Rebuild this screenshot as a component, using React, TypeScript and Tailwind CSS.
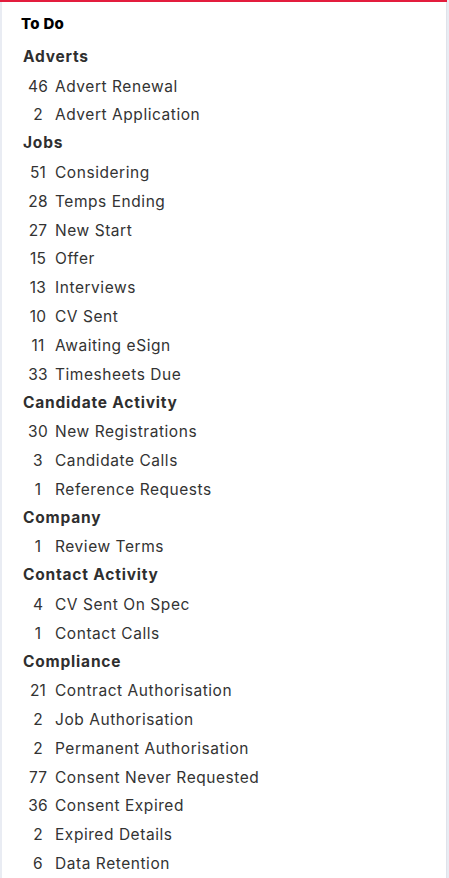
import React from "react";

type Item = [number, string];
type Section = { title: string; items: Item[] };

const sections: Section[] = [
  { title: "Adverts", items: [[46, "Advert Renewal"], [2, "Advert Application"]] },
  {
    title: "Jobs",
    items: [
      [51, "Considering"],
      [28, "Temps Ending"],
      [27, "New Start"],
      [15, "Offer"],
      [13, "Interviews"],
      [10, "CV Sent"],
      [11, "Awaiting eSign"],
      [33, "Timesheets Due"],
    ],
  },
  {
    title: "Candidate Activity",
    items: [[30, "New Registrations"], [3, "Candidate Calls"], [1, "Reference Requests"]],
  },
  { title: "Company", items: [[1, "Review Terms"]] },
  { title: "Contact Activity", items: [[4, "CV Sent On Spec"], [1, "Contact Calls"]] },
  {
    title: "Compliance",
    items: [
      [21, "Contract Authorisation"],
      [2, "Job Authorisation"],
      [2, "Permanent Authorisation"],
      [77, "Consent Never Requested"],
      [36, "Consent Expired"],
      [2, "Expired Details"],
      [6, "Data Retention"],
    ],
  },
];

export default function App() {
  return (
    <div
      className="min-h-[878px] w-[449px] bg-[#e9ecf3] overflow-hidden"
      style={{ fontFamily: "Inter, 'Noto Sans', sans-serif" }}
    >
      <div className="h-[2px] w-[447px] bg-[#e31d3d]" />
      <div className="ml-[2px] w-[445px] bg-white min-h-[876px] border-r border-[#dfe3ea]">
        <div className="pl-[19px] pt-[11px] text-[15px] leading-[22px] font-extrabold tracking-[0.3px] text-black">To Do</div>
        <div className="pt-[8px]">
          {sections.map((s) => (
            <div key={s.title}>
              <div className="pl-[21px] h-[28.8px] leading-[28.8px] text-[15.5px] font-bold tracking-[0.8px] text-[#2f2f2f]">
                {s.title}
              </div>
              {s.items.map(([n, label], i) => (
                <div key={i} className="flex h-[28.8px] items-center text-[15.5px] tracking-[0.55px] text-[#333333]">
                  <span className="ml-[22px] w-[28px] text-center tracking-[0.2px]">{n}</span>
                  <span className="ml-[3px]">{label}</span>
                </div>
              ))}
            </div>
          ))}
        </div>
      </div>
    </div>
  );
}
